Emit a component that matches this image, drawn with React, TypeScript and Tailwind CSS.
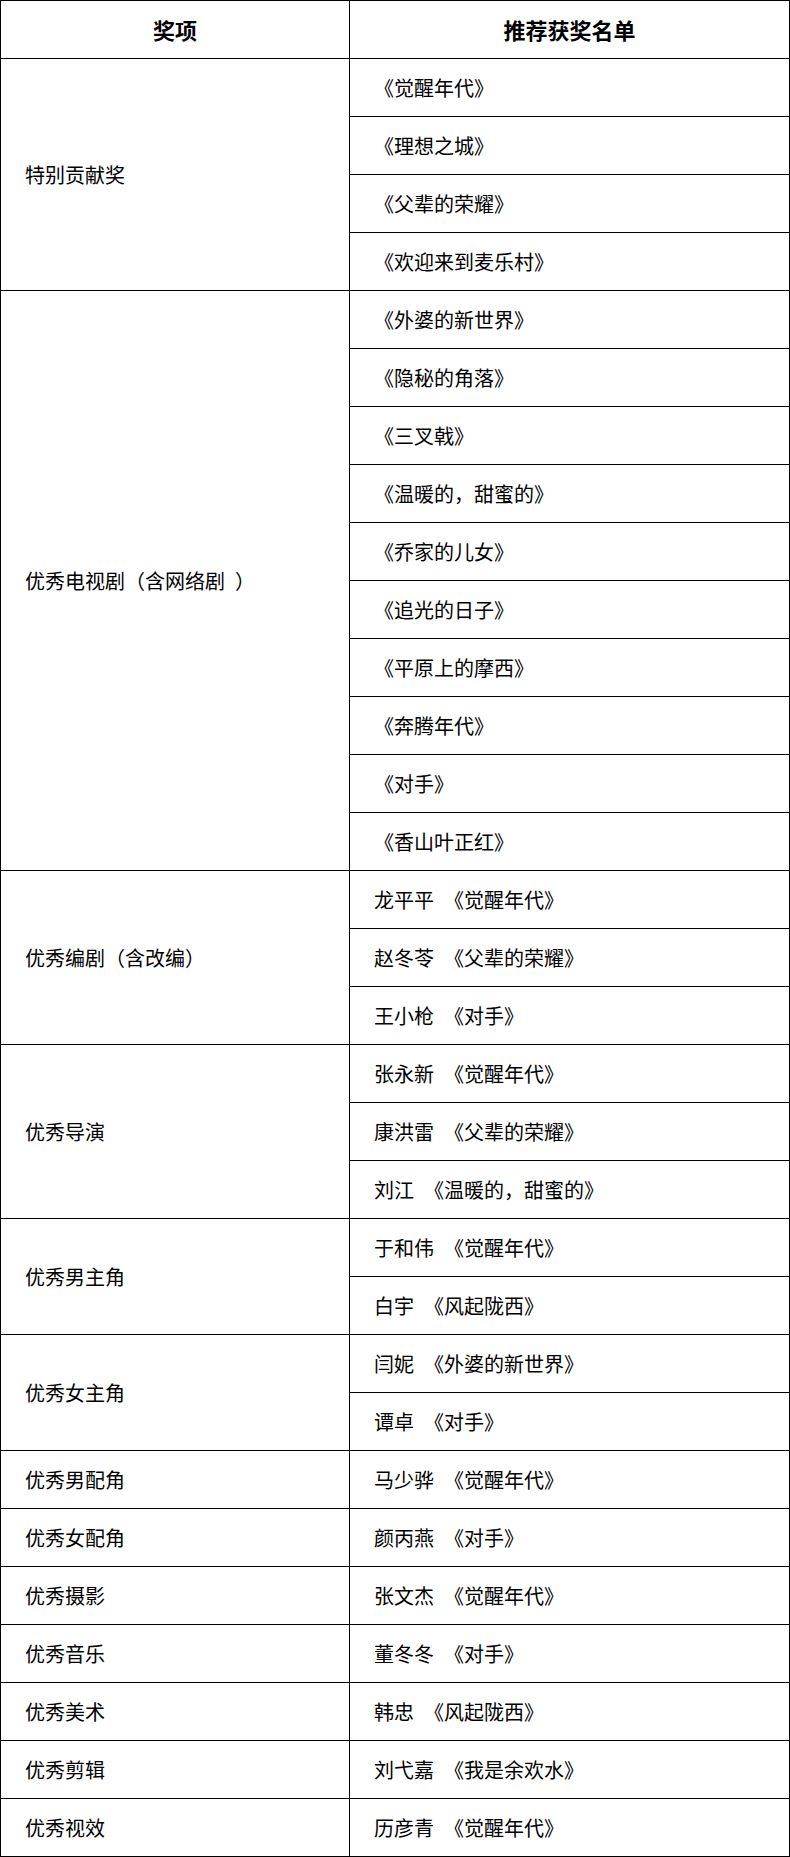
import React from "react";

type Group = { cat: string; items: string[] };

const S = "\u2002";

const groups: Group[] = [
  { cat: "特别贡献奖", items: ["《觉醒年代》", "《理想之城》", "《父辈的荣耀》", "《欢迎来到麦乐村》"] },
  {
    cat: `优秀电视剧（含网络剧${S}）`,
    items: [
      "《外婆的新世界》",
      "《隐秘的角落》",
      "《三叉戟》",
      "《温暖的，甜蜜的》",
      "《乔家的儿女》",
      "《追光的日子》",
      "《平原上的摩西》",
      "《奔腾年代》",
      "《对手》",
      "《香山叶正红》",
    ],
  },
  { cat: "优秀编剧（含改编）", items: [`龙平平${S}《觉醒年代》`, `赵冬苓${S}《父辈的荣耀》`, `王小枪${S}《对手》`] },
  { cat: "优秀导演", items: [`张永新${S}《觉醒年代》`, `康洪雷${S}《父辈的荣耀》`, `刘江${S}《温暖的，甜蜜的》`] },
  { cat: "优秀男主角", items: [`于和伟${S}《觉醒年代》`, `白宇${S}《风起陇西》`] },
  { cat: "优秀女主角", items: [`闫妮${S}《外婆的新世界》`, `谭卓${S}《对手》`] },
  { cat: "优秀男配角", items: [`马少骅${S}《觉醒年代》`] },
  { cat: "优秀女配角", items: [`颜丙燕${S}《对手》`] },
  { cat: "优秀摄影", items: [`张文杰${S}《觉醒年代》`] },
  { cat: "优秀音乐", items: [`董冬冬${S}《对手》`] },
  { cat: "优秀美术", items: [`韩忠${S}《风起陇西》`] },
  { cat: "优秀剪辑", items: [`刘弋嘉${S}《我是余欢水》`] },
  { cat: "优秀视效", items: [`历彦青${S}《觉醒年代》`] },
];

const spanClass: Record<number, string> = {
  1: "row-span-1",
  2: "row-span-2",
  3: "row-span-3",
  4: "row-span-4",
  10: "row-span-10",
};

export default function App() {
  return (
    <div
      className="w-[790px] bg-white text-black"
      style={{ fontFamily: '"Noto Sans CJK SC", "DejaVu Sans", sans-serif' }}
    >
      <div className="grid grid-cols-[348px_439px] auto-rows-[57px] gap-px bg-black p-px">
        <div className="col-start-1 flex items-center justify-center bg-white text-[22px] font-bold">奖项</div>
        <div className="col-start-2 flex items-center justify-center bg-white text-[22px] font-bold">推荐获奖名单</div>
        {groups.map((g) => (
          <React.Fragment key={g.cat}>
            <div
              className={`col-start-1 flex items-center bg-white pl-6 text-[20px] whitespace-pre ${spanClass[g.items.length]}`}
            >
              {g.cat}
            </div>
            {g.items.map((it, i) => (
              <div key={i} className="col-start-2 flex items-center bg-white pl-6 text-[20px] whitespace-pre">
                {it}
              </div>
            ))}
          </React.Fragment>
        ))}
      </div>
    </div>
  );
}
